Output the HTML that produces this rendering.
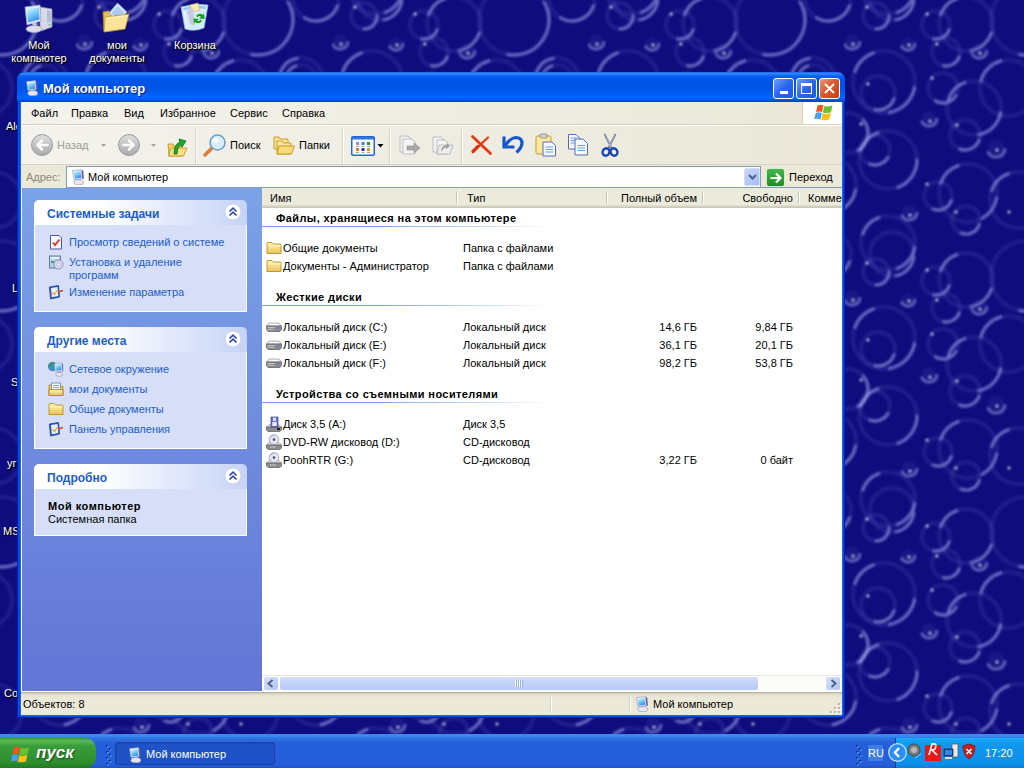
<!DOCTYPE html>
<html><head><meta charset="utf-8">
<style>
*{margin:0;padding:0;box-sizing:border-box}
html,body{width:1024px;height:768px;overflow:hidden}
body{position:relative;background:#14107a;font-family:"Liberation Sans",sans-serif;font-size:11px;color:#000}
.a{position:absolute}
.t{position:absolute;white-space:nowrap;line-height:13px}
/* desktop labels */
.dl{position:absolute;color:#fff;text-align:center;font-size:11px;line-height:13px;text-shadow:1px 1px 0 #000,1px 1px 2px #000}
/* window */
#win{left:17px;top:72px;width:828px;height:646px;background:#0848e4;border-radius:8px 8px 0 0;box-shadow:inset 1px 0 #0024b8,inset -1px 0 #0024b8,inset 0 -1px #0024b8}
#title{left:0;top:0;width:828px;height:30px;border-radius:8px 8px 0 0;background:linear-gradient(#0a50e0 0px,#3a8cff 1px,#2d7ffb 2px,#0a60f4 4px,#0055ea 8px,#0053e4 16px,#005cf2 21px,#0066ff 25px,#0062fa 27px,#0048d2 29px,#0040c4 30px)}
#client{left:4px;top:30px;width:821px;height:613px;background:#ece9d8;overflow:hidden;box-shadow:-1px 0 #1866f0,1px 0 #1866f0,0 1px #1866f0}
.menu{left:0;top:0;width:821px;height:23px;background:linear-gradient(90deg,#f3f2ec,#ebe8d9)}
.tb{left:0;top:23px;width:821px;height:40px;background:linear-gradient(90deg,#f3f2ec,#ebe8d9);border-top:1px solid #fff;border-bottom:1px solid #d8d2bd}
.addr{left:0;top:63px;width:821px;height:23px;background:#ece9d8}
.lp{left:0;top:86px;width:241px;height:504px;background:linear-gradient(#7ba2e7,#6375d6);border-left:1px solid #fff;border-bottom:1px solid #fff}
.ct{left:241px;top:86px;width:580px;height:504px;background:#fff}
.sb{left:0;top:590px;width:821px;height:23px;background:linear-gradient(#a8a596 0,#c8c5b4 1px,#dedbcb 2px,#e8e5d5 4px,#ece9d8 7px)}
.box{position:absolute;left:12px;width:213px}
.bh{position:absolute;left:0;top:0;width:213px;height:25px;border-radius:5px 5px 0 0;background:linear-gradient(90deg,#fff 0%,#fff 30%,#c6d3f7 100%)}
.bb{position:absolute;left:0;top:25px;width:213px;background:#d6dff7;border:1px solid #fff;border-top:none}
.bt{position:absolute;left:13px;top:8px;font-weight:bold;color:#215dc6;font-size:12px;line-height:13px;white-space:nowrap}
.lk{position:absolute;left:34px;color:#215dc6;white-space:nowrap;line-height:13px}
.cb{position:absolute;left:191px;top:3px;width:17px;height:17px;border-radius:50%;background:#fff;box-shadow:0 1px 2px #8ea3d8}
#taskbar{left:0;top:734px;width:1024px;height:34px;background:linear-gradient(#3a7fe6 0,#3d8cf2 1px,#3786ee 3px,#2a6ce0 4px,#2f72e4 5px,#2a66dc 7px,#245edb 10px,#245edb 31px,#1e52c8 34px)}
.hdr{left:0;top:0;width:580px;height:20px;background:linear-gradient(#ebeadb 0,#ebeadb 17px,#e2decd 17px,#e2decd 18px,#d6d2c2 18px,#d6d2c2 19px,#cbc7b8 19px)}
.hs{position:absolute;top:3px;width:2px;height:13px;border-left:1px solid #c7c5b2;border-right:1px solid #fff}
.gh{font-weight:bold;letter-spacing:0.4px}
.gl{position:absolute;left:0;width:290px;height:1px;background:linear-gradient(90deg,#7ba2e7,#7ba2e7 40%,rgba(123,162,231,0))}
.r1{left:340px;width:95px;text-align:right}
.r2{left:440px;width:91px;text-align:right}
.sep{position:absolute;top:3px;width:2px;height:35px;border-left:1px solid #d8d2bd;border-right:1px solid #fff}
.tbtn{position:absolute;width:21px;height:21px;border:1px solid #fff;border-radius:3px;background:linear-gradient(135deg,#6e9ffa,#2a66ec 50%,#1f58e0)}
.sbb{position:absolute;width:16px;height:15px;border-radius:3px;border:1px solid #fff;background:linear-gradient(135deg,#d6e0fc,#c0d0f8 60%,#b0c4f4)}
#start{left:0;top:4px;width:96px;height:30px;border-radius:0 11px 11px 0;background:linear-gradient(#3c9c3c 0,#58b858 3px,#3a9c3a 8px,#2f8f2f 24px,#1f7a1f 30px)}
#tbtask{left:115px;top:8px;width:160px;height:23px;border-radius:3px;background:#1e52c6;border:1px solid #1842a8;box-shadow:inset 1px 1px 0 #1a48b0}
#tray{left:895px;top:4px;width:129px;height:30px;background:linear-gradient(#1cb0f8 0,#12a0f2 3px,#0f96ee 8px,#0c90ea 26px,#0c7fd8 30px);border-left:1px solid #0b3c9c}
.w1{fill:none;stroke:rgba(130,140,235,0.13);stroke-width:4.5}.w2{fill:none;stroke:rgba(185,192,255,0.42);stroke-width:3.4;stroke-linecap:round}.w3{fill:rgba(120,130,230,0.1)}.w4{fill:rgba(255,255,255,0.75)}
</style></head>
<body>
<svg width="0" height="0" style="position:absolute">
<defs>
 <linearGradient id="gcirc" x1="0" y1="0" x2="0" y2="1"><stop offset="0" stop-color="#dedede"/><stop offset="1" stop-color="#a9a9a9"/></linearGradient>
 <linearGradient id="gfold" x1="0" y1="0" x2="0" y2="1"><stop offset="0" stop-color="#fff2b0"/><stop offset="1" stop-color="#e9c55a"/></linearGradient>
 <linearGradient id="gscr" x1="0.3" y1="0" x2="0.7" y2="1"><stop offset="0" stop-color="#c8f4ff"/><stop offset="0.5" stop-color="#6cc4f8"/><stop offset="1" stop-color="#2a8ae8"/></linearGradient>
 <linearGradient id="ggo" x1="0" y1="0" x2="0" y2="1"><stop offset="0" stop-color="#3cb043"/><stop offset="1" stop-color="#138a1b"/></linearGradient>
 <symbol id="i-comp" viewBox="0 0 32 32">
  <path d="M18 5 L30 7 L30 25 L19 29 L18 28 Z" fill="#d7d8e8" stroke="#8c8fb8" stroke-width="0.8"/>
  <path d="M25 8 L29 9 L29 20 L25 21 Z" fill="#b9bcd6"/>
  <circle cx="27.5" cy="23" r="0.9" fill="#46d246"/>
  <path d="M3 5 L18 3 L19 19 L5 23 Z" fill="#e8ebf5" stroke="#9aa0c8" stroke-width="0.8"/>
  <path d="M5 7 L17 5.5 L17.5 17.5 L6 20.5 Z" fill="url(#gscr)"/>
  <path d="M10 21 L14 20 L15 25 L11 25 Z" fill="#c8cbe0"/>
  <ellipse cx="12" cy="27" rx="8" ry="3.5" fill="#dcdde8" stroke="#9a9cb8" stroke-width="0.8"/>
 </symbol>
 <symbol id="i-comps" viewBox="0 0 16 16">
  <path d="M10.5 0.8 L12.3 1.8 L12.8 10 L11 9.6 Z" fill="#54589a"/>
  <path d="M1.5 1.6 L10.6 0.6 L11.1 9.6 L3 10.6 Z" fill="#eceef6" stroke="#8a90bc" stroke-width="0.6"/>
  <path d="M2.8 2.7 L9.7 2 L10.1 8.7 L3.8 9.5 Z" fill="url(#gscr)"/>
  <path d="M6 10.3 L9.5 9.9 L10 12.2 L6.5 12.4 Z" fill="#a8aad0"/>
  <ellipse cx="7.8" cy="13.2" rx="5" ry="2.6" fill="#e6e6f0" stroke="#8a8ab4" stroke-width="0.6"/>
 </symbol>
 <symbol id="i-fold" viewBox="0 0 16 16">
  <path d="M1 3.5 Q1 2.5 2 2.5 L6 2.5 L7.5 4 L14 4 Q15 4 15 5 L15 13.5 L1 13.5 Z" fill="url(#gfold)" stroke="#c08f1a" stroke-width="0.9"/>
  <path d="M1.5 6 L14.5 6" stroke="#fff7d0" stroke-width="0.8"/>
 </symbol>
 <symbol id="i-hdd" viewBox="0 0 16 16">
  <path d="M0.5 7 L3 4 L13 4 L15.5 7 Z" fill="#ececec" stroke="#9a9a9a" stroke-width="0.7"/>
  <path d="M5 5 L11 5 L12 6.3 L4 6.3 Z" fill="#fff"/>
  <path d="M0.5 7 L15.5 7 L15.5 10.5 L14 12.5 L2 12.5 L0.5 10.5 Z" fill="#8c8c8c" stroke="#5a5a5a" stroke-width="0.7"/>
  <path d="M1.5 8.5 L9 8.5 M1.5 10.3 L8 10.3" stroke="#d0d0d0" stroke-width="0.8"/>
  <rect x="11" y="8.2" width="2.5" height="2" fill="#6a7ae8"/>
 </symbol>
 <symbol id="i-cd" viewBox="0 0 16 16">
  <path d="M0.5 11 L3 8.5 L13 8.5 L15.5 11 Z" fill="#e6e6e6" stroke="#9a9a9a" stroke-width="0.7"/>
  <path d="M0.5 11 L15.5 11 L15.5 14 L14 15.5 L2 15.5 L0.5 14 Z" fill="#8c8c8c" stroke="#5a5a5a" stroke-width="0.7"/>
  <path d="M4 13 L10 13" stroke="#d8d8d8" stroke-width="0.8"/>
  <ellipse cx="8" cy="5.6" rx="4.8" ry="5" fill="#e4e4f8" stroke="#8a8aa8" stroke-width="0.7"/>
  <path d="M4.5 4 Q6 1.5 8 1.5" stroke="#b8b8f0" stroke-width="1" fill="none"/>
  <circle cx="8" cy="5.6" r="1.3" fill="#555"/>
 </symbol>
 <symbol id="i-flop" viewBox="0 0 16 16">
  <path d="M0.5 11 L3 8.5 L13 8.5 L15.5 11 Z" fill="#e6e6e6" stroke="#9a9a9a" stroke-width="0.7"/>
  <path d="M0.5 11 L15.5 11 L15.5 14 L14 15.5 L2 15.5 L0.5 14 Z" fill="#8c8c8c" stroke="#5a5a5a" stroke-width="0.7"/>
  <rect x="11" y="12" width="3" height="2" fill="#222"/>
  <rect x="5" y="1" width="7" height="10" fill="#6a72c8" stroke="#3a4098" stroke-width="0.7"/>
  <rect x="7" y="1.5" width="3" height="3.5" fill="#d8dcf0"/>
  <rect x="6.3" y="6" width="4.4" height="4" fill="#e8eaf8"/>
 </symbol>
 <symbol id="i-chev" viewBox="0 0 18 18">
  <circle cx="9" cy="9" r="8" fill="#fff" stroke="#c8d3ee" stroke-width="1"/>
  <path d="M5.5 8.5 L9 5.2 L12.5 8.5 M5.5 12.5 L9 9.2 L12.5 12.5" fill="none" stroke="#2a4ab0" stroke-width="1.6"/>
 </symbol>
 <symbol id="i-sysinfo" viewBox="0 0 16 16">
  <path d="M2.5 1.5 L11 1.5 L13.5 4 L13.5 15 L2.5 15 Z" fill="#f6f8ff" stroke="#4a5a9a" stroke-width="1"/>
  <path d="M5 8.5 L7 11 L11.5 5.5" fill="none" stroke="#e8301a" stroke-width="1.8"/>
 </symbol>
 <symbol id="i-addrem" viewBox="0 0 16 16">
  <rect x="1.5" y="2" width="11" height="12" fill="#b4cfe8" stroke="#5a7290" stroke-width="0.9"/>
  <rect x="2.5" y="3" width="9" height="2" fill="#e8f0ff"/>
  <circle cx="10.5" cy="10.5" r="4.6" fill="#d8d8f0" stroke="#7a7ab0" stroke-width="0.8"/>
  <circle cx="10.5" cy="10.5" r="1.5" fill="#fff" stroke="#9a9ac8" stroke-width="0.6"/>
  <path d="M3 8 L6 8" stroke="#2a9a2a" stroke-width="1.6"/>
 </symbol>
 <symbol id="i-cpl" viewBox="0 0 16 16">
  <path d="M1.5 3 L10.5 1.5 L11.5 13 L2.5 15 Z" fill="#2c5bd0" stroke="#1a3a90" stroke-width="0.8"/>
  <path d="M3 4 L9.5 3 L10.3 12 L3.8 13.3 Z" fill="#e8f0ff"/>
  <path d="M4.5 8.5 L6.5 10.5 L9 6.5" fill="none" stroke="#e8a020" stroke-width="1.3"/>
  <path d="M10 8 L15 6.5" stroke="#c84a2a" stroke-width="1.5"/>
 </symbol>
 <symbol id="i-net" viewBox="0 0 16 16">
  <circle cx="4.5" cy="5.5" r="4.2" fill="#3a8ee0" stroke="#2a5aa0" stroke-width="0.6"/>
  <path d="M1.5 4 Q3 1.5 5.5 2 Q5 5 2.5 6 Z M5 6.5 Q7 5.5 8 7 Q6.5 9.5 5 8.5 Z" fill="#3aa43a"/>
  <path d="M13.8 2 L15 3 L15.3 10.5 L14 10 Z" fill="#54589a"/>
  <path d="M6.5 2.6 L14 1.8 L14.3 10 L7.3 10.8 Z" fill="#eceef6" stroke="#8a90bc" stroke-width="0.6"/>
  <path d="M7.6 3.6 L13.2 3 L13.4 9 L8.3 9.7 Z" fill="url(#gscr)"/>
  <path d="M10 10.6 L12.5 10.3 L12.8 12.5 L10.3 12.6 Z" fill="#a8aad0"/>
  <ellipse cx="11.2" cy="13.4" rx="3.6" ry="2" fill="#e6e6f0" stroke="#8a8ab4" stroke-width="0.6"/>
 </symbol>
 <symbol id="i-mydocs" viewBox="0 0 16 16">
  <path d="M1 4 L6 4 L7.5 5.5 L15 5.5 L15 14.5 L1 14.5 Z" fill="#f2cf5a" stroke="#b88a1a" stroke-width="0.9"/>
  <rect x="3.5" y="2" width="9" height="8" fill="#f4f6ff" stroke="#7080b0" stroke-width="0.8"/>
  <path d="M5 4.5 H11 M5 6.5 H11" stroke="#7aa0d8" stroke-width="0.9"/>
  <path d="M1 8.5 L15 8.5 L15 14.5 L1 14.5 Z" fill="url(#gfold)" stroke="#b88a1a" stroke-width="0.9"/>
 </symbol>
 <symbol id="i-flag" viewBox="0 0 20 18">
  <path d="M4 1.5 Q6.5 0 10 1.5 L8.5 8 Q5.5 6.8 2.5 8 Z" fill="#f0561e"/>
  <path d="M10.8 2 Q14 3.2 19 1.5 L17.5 8.2 Q13.5 9.5 9.3 8.4 Z" fill="#6cc22e"/>
  <path d="M2.3 8.8 Q5.5 7.6 8.4 8.9 L7 15.5 Q4 14.3 0.8 15.3 Z" fill="#4aa0ea"/>
  <path d="M9.2 9.2 Q13.3 10.3 17.3 9 L15.8 15.6 Q12 17 7.8 15.7 Z" fill="#f8c21a"/>
 </symbol>
</defs></svg>
<!--WALL--><svg class="a" style="left:0;top:0" width="1024" height="768"><defs><filter id="wb" x="-20%" y="-20%" width="140%" height="140%"><feGaussianBlur stdDeviation="1"/></filter><pattern id="wp" width="256" height="256" patternUnits="userSpaceOnUse"><rect width="256" height="256" fill="#0f0c7d"/><g filter="url(#wb)"><circle cx="2" cy="20" r="35" class="w1"/><path d="M32.3 2.5A35 35 0 0 1 -4.1 54.5" class="w2"/><circle cx="2" cy="276" r="35" class="w1"/><path d="M32.3 258.5A35 35 0 0 1 -4.1 310.5" class="w2"/><circle cx="258" cy="20" r="35" class="w1"/><path d="M288.3 2.5A35 35 0 0 1 251.9 54.5" class="w2"/><circle cx="258" cy="276" r="35" class="w1"/><path d="M288.3 258.5A35 35 0 0 1 251.9 310.5" class="w2"/><circle cx="60" cy="-2" r="23" class="w1"/><path d="M81.6 5.9A23 23 0 0 1 48.5 17.9" class="w2"/><circle cx="60" cy="254" r="23" class="w1"/><path d="M81.6 261.9A23 23 0 0 1 48.5 273.9" class="w2"/><circle cx="108" cy="16" r="13" class="w1"/><path d="M121.0 16.0A13 13 0 0 1 108.0 29.0" class="w2"/><circle cx="99" cy="7" r="1.6" class="w4"/><circle cx="108" cy="272" r="13" class="w1"/><path d="M121.0 272.0A13 13 0 0 1 108.0 285.0" class="w2"/><circle cx="99" cy="263" r="1.6" class="w4"/><path d="M91.9 42.4A8 8 0 0 1 77.1 45.0" class="w2"/><circle cx="84" cy="41" r="7" class="w3"/><circle cx="85" cy="44" r="1.6" class="w4"/><circle cx="45" cy="80" r="22" class="w1"/><path d="M24.3 72.5A22 22 0 0 1 41.2 58.3" class="w2"/><circle cx="45" cy="80" r="15" class="w1"/><path d="M30.9 74.9A15 15 0 0 1 39.9 65.9" class="w2"/><circle cx="116" cy="82" r="31" class="w1"/><path d="M86.9 71.4A31 31 0 0 1 105.4 52.9" class="w2"/><path d="M146.5 87.4A31 31 0 0 1 121.4 112.5" class="w2"/><circle cx="110" cy="93" r="17" class="w1"/><path d="M126.0 98.8A17 17 0 0 1 107.0 109.7" class="w2"/><circle cx="100" cy="84" r="1.6" class="w4"/><circle cx="124" cy="-2" r="22" class="w1"/><path d="M145.7 1.8A22 22 0 0 1 127.8 19.7" class="w2"/><circle cx="124" cy="254" r="22" class="w1"/><path d="M145.7 257.8A22 22 0 0 1 127.8 275.7" class="w2"/><circle cx="168" cy="25" r="14" class="w1"/><path d="M181.2 29.8A14 14 0 0 1 165.6 38.8" class="w2"/><circle cx="159" cy="14" r="1.6" class="w4"/><circle cx="198" cy="24" r="27" class="w1"/><path d="M172.6 14.8A27 27 0 0 1 188.8 -1.4" class="w2"/><path d="M223.4 33.2A27 27 0 0 1 202.7 50.6" class="w2"/><circle cx="198" cy="280" r="27" class="w1"/><path d="M172.6 270.8A27 27 0 0 1 188.8 254.6" class="w2"/><path d="M223.4 289.2A27 27 0 0 1 202.7 306.6" class="w2"/><path d="M146.9 44.2A7 7 0 0 1 133.9 46.5" class="w2"/><circle cx="140" cy="43" r="6" class="w3"/><circle cx="141" cy="45" r="1.6" class="w4"/><circle cx="178" cy="52" r="14" class="w1"/><path d="M191.2 56.8A14 14 0 0 1 175.6 65.8" class="w2"/><circle cx="169" cy="44" r="1.6" class="w4"/><path d="M218.9 51.4A8 8 0 0 1 204.1 54.0" class="w2"/><circle cx="211" cy="50" r="7" class="w3"/><circle cx="212" cy="53" r="1.6" class="w4"/><circle cx="240" cy="88" r="28" class="w1"/><path d="M213.0 80.8A28 28 0 0 1 232.8 61.0" class="w2"/><circle cx="-16" cy="88" r="28" class="w1"/><path d="M-43.0 80.8A28 28 0 0 1 -23.2 61.0" class="w2"/><circle cx="175" cy="88" r="15" class="w1"/><path d="M188.0 95.5A15 15 0 0 1 167.5 101.0" class="w2"/><circle cx="164" cy="78" r="1.6" class="w4"/><circle cx="206" cy="108" r="27" class="w1"/><path d="M180.6 98.8A27 27 0 0 1 196.8 82.6" class="w2"/><path d="M232.6 112.7A27 27 0 0 1 210.7 134.6" class="w2"/><path d="M168.9 119.4A8 8 0 0 1 154.1 122.0" class="w2"/><circle cx="161" cy="118" r="7" class="w3"/><circle cx="162" cy="121" r="1.6" class="w4"/><circle cx="80" cy="133" r="20" class="w1"/><path d="M95.3 120.1A20 20 0 0 1 90.0 150.3" class="w2"/><circle cx="93" cy="124" r="1.6" class="w4"/><circle cx="120" cy="160" r="29" class="w1"/><path d="M92.7 150.1A29 29 0 0 1 110.1 132.7" class="w2"/><path d="M149.0 160.0A29 29 0 0 1 129.9 187.3" class="w2"/><circle cx="107" cy="150" r="15" class="w1"/><path d="M120.0 157.5A15 15 0 0 1 101.9 164.1" class="w2"/><circle cx="197" cy="135" r="15" class="w1"/><path d="M211.1 140.1A15 15 0 0 1 191.9 149.1" class="w2"/><circle cx="189" cy="125" r="1.6" class="w4"/><path d="M236.9 149.6A9 9 0 0 1 220.2 152.5" class="w2"/><circle cx="228" cy="148" r="8" class="w3"/><circle cx="229" cy="150" r="1.6" class="w4"/><circle cx="200" cy="193" r="29" class="w1"/><path d="M172.7 183.1A29 29 0 0 1 190.1 165.7" class="w2"/><path d="M228.6 198.0A29 29 0 0 1 214.5 218.1" class="w2"/><circle cx="250" cy="200" r="28" class="w1"/><path d="M223.7 190.4A28 28 0 0 1 240.4 173.7" class="w2"/><circle cx="241" cy="212" r="1.6" class="w4"/><circle cx="-6" cy="200" r="28" class="w1"/><path d="M-32.3 190.4A28 28 0 0 1 -15.6 173.7" class="w2"/><circle cx="-15" cy="212" r="1.6" class="w4"/><circle cx="60" cy="185" r="28" class="w1"/><path d="M87.6 189.9A28 28 0 0 1 64.9 212.6" class="w2"/><circle cx="170" cy="196" r="14" class="w1"/><path d="M183.2 200.8A14 14 0 0 1 165.2 209.2" class="w2"/><circle cx="159" cy="184" r="1.6" class="w4"/><circle cx="198" cy="220" r="14" class="w1"/><path d="M211.2 224.8A14 14 0 0 1 193.2 233.2" class="w2"/><circle cx="188" cy="212" r="1.6" class="w4"/><path d="M148.9 213.4A8 8 0 0 1 134.1 216.0" class="w2"/><circle cx="141" cy="212" r="7" class="w3"/><circle cx="142" cy="215" r="1.6" class="w4"/><circle cx="120" cy="243" r="27" class="w1"/><path d="M94.6 233.8A27 27 0 0 1 110.8 217.6" class="w2"/><path d="M146.6 247.7A27 27 0 0 1 129.2 268.4" class="w2"/><circle cx="120" cy="-13" r="27" class="w1"/><path d="M94.6 -22.2A27 27 0 0 1 110.8 -38.4" class="w2"/><path d="M146.6 -8.3A27 27 0 0 1 129.2 12.4" class="w2"/></g></pattern></defs><rect width="1024" height="768" fill="url(#wp)"/></svg><!--/WALL-->
<!-- desktop icons -->
<svg class="a" style="left:22px;top:2px" width="32" height="32"><use href="#i-comp"/></svg>
<svg class="a" style="left:100px;top:2px" width="32" height="32" viewBox="0 0 32 32"><path d="M3 10 L9 9 L11 11 L24 10 L23 26 L4 29 Z" fill="#e8c050" stroke="#b88a20" stroke-width="0.8"/><path d="M9 11 L17.5 1 L27 10 L18.5 20 Z" fill="#d6e8fc" stroke="#7a9ad0" stroke-width="0.8"/><path d="M11.5 11 L17.5 4 L24.5 10.5 L18.5 17.5 Z" fill="#a8caf4"/><path d="M5 15 L29 12 L25 27 L4 30 Z" fill="#fbe49a" stroke="#c49a28" stroke-width="0.8"/><path d="M6 16.5 L27.5 13.5" stroke="#fff4c8" stroke-width="1"/></svg>
<svg class="a" style="left:178px;top:2px" width="32" height="32" viewBox="0 0 32 32"><path d="M3 5 Q16 1 30 3 L26 26 Q16 30 7 27 Z" fill="#d4ecfc" stroke="#8ab8e0" stroke-width="0.8"/><path d="M5 6 Q16 3 28 4.5 L27.5 7 Q16 5.5 5.5 8.5 Z" fill="#9cc8f0"/><path d="M12 3 L20 1 L22 8 L14 10 Z" fill="#f8eab0" stroke="#d0b060" stroke-width="0.6"/><path d="M9 9 L15 6.5 L17 24 L12 22 Z" fill="#c8c8e0"/><path d="M18 14 Q21 10 25 13 L26 11 L26.5 17 L21 16.5 L23 15 Q21 13 19.5 15.5 Z M24 19 Q21 23 17 20 L16 22 L15.5 16.5 L21 17 L19 18.5 Q21 20 22.5 17.5 Z" fill="#12a01a"/><path d="M6 8 L9 26" stroke="#ffffff" stroke-width="1.2" opacity="0.6"/></svg>
<div class="dl" style="left:0;top:39px;width:78px">Мой<br>компьютер</div>
<div class="dl" style="left:78px;top:39px;width:78px">мои<br>документы</div>
<div class="dl" style="left:156px;top:39px;width:78px">Корзина</div>

<div class="dl" style="left:6px;top:120px;text-align:left">Alc</div>
<div class="dl" style="left:12px;top:282px;text-align:left">L</div>
<div class="dl" style="left:11px;top:376px;text-align:left">S</div>
<div class="dl" style="left:7px;top:457px;text-align:left">уг</div>
<div class="dl" style="left:3px;top:525px;text-align:left">MS</div>
<div class="dl" style="left:4px;top:687px;text-align:left">Co</div>
<div class="a" id="win">
 <div class="a" id="title">
  <svg class="a" style="left:8px;top:8px" width="16" height="16"><use href="#i-comps"/></svg>
  <div class="t" style="left:26px;top:9px;color:#fff;font-weight:bold;font-size:13px;line-height:15px;text-shadow:1px 1px #0a1883">Мой компьютер</div>
  <div class="a tbtn" style="left:756px;top:6px"><div class="a" style="left:6px;top:12px;width:8px;height:3px;background:#fff"></div></div>
  <div class="a tbtn" style="left:779px;top:6px"><div class="a" style="left:4px;top:4px;width:11px;height:11px;border:1px solid #fff;border-top-width:3px"></div></div>
  <div class="a tbtn" style="left:802px;top:6px;background:linear-gradient(135deg,#eb9a7c,#dc5a2e 45%,#c83c10)"><svg class="a" style="left:3px;top:3px" width="13" height="13"><path d="M2 2 L11 11 M11 2 L2 11" stroke="#fff" stroke-width="2"/></svg></div>
 </div>
 <div class="a" id="client">
  <div class="a menu">
   <div class="t" style="left:10px;top:5px">Файл</div>
   <div class="t" style="left:50px;top:5px">Правка</div>
   <div class="t" style="left:103px;top:5px">Вид</div>
   <div class="t" style="left:139px;top:5px">Избранное</div>
   <div class="t" style="left:209px;top:5px">Сервис</div>
   <div class="t" style="left:261px;top:5px">Справка</div>
   <div class="a" style="left:781px;top:0;width:40px;height:22px;background:#fff;border-left:1px solid #d8d2bd"><svg class="a" style="left:10px;top:2px" width="21" height="18"><use href="#i-flag"/></svg></div>
   <div class="a" style="left:0;top:22px;width:821px;height:1px;background:#d8d2bd"></div>
  </div>
  <div class="a tb">
   <svg class="a" style="left:10px;top:8px" width="22" height="22" viewBox="0 0 22 22"><circle cx="11" cy="11" r="10.5" fill="url(#gcirc)" stroke="#9c9c9c" stroke-width="1"/><path d="M16.5 11 H7 M11 6.5 L6.5 11 L11 15.5" fill="none" stroke="#fafafa" stroke-width="2.6" stroke-linecap="round" stroke-linejoin="round"/></svg>
   <div class="t" style="left:36px;top:13px;color:#a19f92">Назад</div>
   <svg class="a" style="left:79px;top:18px" width="7" height="4"><path d="M1 0 H6 L3.5 3 Z" fill="#a8a69a"/></svg>
   <svg class="a" style="left:97px;top:8px" width="22" height="22" viewBox="0 0 22 22"><circle cx="11" cy="11" r="10.5" fill="url(#gcirc)" stroke="#9c9c9c" stroke-width="1"/><path d="M5.5 11 H15 M11 6.5 L15.5 11 L11 15.5" fill="none" stroke="#fafafa" stroke-width="2.6" stroke-linecap="round" stroke-linejoin="round"/></svg>
   <svg class="a" style="left:129px;top:18px" width="7" height="4"><path d="M1 0 H6 L3.5 3 Z" fill="#a8a69a"/></svg>
   <svg class="a" style="left:146px;top:8px" width="22" height="24" viewBox="0 0 22 24"><path d="M1 10 L6 10 L7.5 12 L15 12 L15 22 L2 22 Z" fill="#f0d070" stroke="#c4951e" stroke-width="0.9"/><path d="M4 14 L20 14 L16.5 22 L1.5 22 Z" fill="#f8e08a" stroke="#c4951e" stroke-width="0.9"/><path d="M7 20 Q7 10 13 8 L12 5 L19 7 L15 13 L14.5 10.5 Q10.5 12 10 20 Z" fill="#22a82a" stroke="#0c6c10" stroke-width="0.8" stroke-linejoin="round"/></svg>
   <div class="sep" style="left:174px"></div>
   <svg class="a" style="left:182px;top:7px" width="24" height="24" viewBox="0 0 24 24"><path d="M2 22 L9 15" stroke="#d6803a" stroke-width="3.5" stroke-linecap="round"/><circle cx="14.5" cy="9.5" r="7.5" fill="#d8eefc" stroke="#6e9fc6" stroke-width="1.6"/><circle cx="12.5" cy="7.5" r="2.5" fill="#fff"/></svg>
   <div class="t" style="left:209px;top:13px">Поиск</div>
   <svg class="a" style="left:252px;top:8px" width="22" height="22" viewBox="0 0 22 22"><path d="M1 3 L6 3 L7.5 5 L15 5 L15 15 L1 15 Z" fill="#f7e29a" stroke="#c4951e" stroke-width="0.9"/><path d="M4 7 L9 7 L10.5 9 L18 9 L18 20 L4 20 Z" fill="url(#gfold)" stroke="#c4951e" stroke-width="0.9"/><path d="M6 12 L21.5 12 L18.5 20 L4 20 Z" fill="#f8dc78" stroke="#c4951e" stroke-width="0.9"/></svg>
   <div class="t" style="left:278px;top:13px">Папки</div>
   <div class="sep" style="left:321px"></div>
   <svg class="a" style="left:330px;top:10px" width="24" height="20" viewBox="0 0 24 20"><rect x="0.75" y="0.75" width="22.5" height="18.5" rx="1.2" fill="#fff" stroke="#1f66d8" stroke-width="1.5"/><rect x="1" y="1" width="22" height="2.5" fill="#2f76e2"/><rect x="5" y="6" width="3" height="3" fill="#9a8ed0"/><rect x="10.5" y="6" width="3" height="3" fill="#2a8ae8"/><rect x="16" y="6" width="3" height="3" fill="#1a9a3a"/><rect x="5" y="12" width="3" height="3" fill="#f0703a"/><rect x="10.5" y="12" width="3" height="3" fill="#1a3aa0"/><rect x="16" y="12" width="3" height="3" fill="#d8a020"/><path d="M5 10.5 H8 M10.5 10.5 H13.5 M16 10.5 H19 M5 16.5 H8 M10.5 16.5 H13.5 M16 16.5 H19" stroke="#888" stroke-width="0.8"/></svg>
   <svg class="a" style="left:356px;top:18px" width="7" height="4"><path d="M0.5 0 H6.5 L3.5 3.5 Z" fill="#000"/></svg>
   <div class="sep" style="left:368px"></div>
   <svg class="a" style="left:377px;top:8px" width="24" height="22" viewBox="0 0 24 22"><path d="M2 2 L10 2 L13 5 L13 18 L2 18 Z" fill="#f0f0f0" stroke="#b8b8b8" stroke-width="0.9"/><path d="M5 5 L14 5 L17 8 L17 20 L5 20 Z" fill="#f4f4f4" stroke="#b8b8b8" stroke-width="0.9"/><path d="M9 12 L16 12 L16 9 L22 14 L16 19 L16 16 L9 16 Z" fill="#a8a8a8" stroke="#8a8a8a" stroke-width="0.6"/></svg>
   <svg class="a" style="left:408px;top:8px" width="26" height="22" viewBox="0 0 26 22"><path d="M4 3 L12 3 L15 6 L15 18 L4 18 Z" fill="#f2f2f2" stroke="#b8b8b8" stroke-width="0.9"/><path d="M8 6 L16 6 L19 9 L19 20 L8 20 Z" fill="#f4f4f4" stroke="#b8b8b8" stroke-width="0.9"/><path d="M10 11 L24 11 L21 20 L8 20 Z" fill="#ededed" stroke="#b0b0b0" stroke-width="0.8"/><path d="M12 18 Q12 12 18 11 L17 9 L21 12 L17 15 L17 13 Q14 14 12 18 Z" fill="#9a9a9a"/></svg>
   <div class="sep" style="left:440px"></div>
   <svg class="a" style="left:449px;top:8px" width="24" height="22" viewBox="0 0 24 22"><path d="M2.5 2.5 L20.5 19.5" stroke="#e8380e" stroke-width="2.8" stroke-linecap="round"/><path d="M18 3.5 L3 17.5" stroke="#e8380e" stroke-width="2.2" stroke-linecap="round"/><path d="M8 12.5 L3 17.5" stroke="#e03008" stroke-width="3.2" stroke-linecap="round"/></svg>
   <svg class="a" style="left:481px;top:8px" width="22" height="22" viewBox="0 0 22 22"><path d="M2 2.5 L2 13 L12.5 13" fill="none" stroke="#1456cc" stroke-width="3.2" stroke-linejoin="miter"/><path d="M3 12 Q8.5 3.5 14.5 3.5 Q20 4 20 9.5 Q19.5 14 14.5 18.5" fill="none" stroke="#1456cc" stroke-width="3.2" stroke-linecap="butt"/></svg>
   <svg class="a" style="left:514px;top:7px" width="22" height="24" viewBox="0 0 22 24"><rect x="1" y="3" width="15" height="18" rx="1.5" fill="#fce79a" stroke="#c49a28" stroke-width="1"/><rect x="5" y="1" width="7" height="4" rx="1" fill="#d0d0d0" stroke="#888" stroke-width="0.8"/><path d="M8 9 L17 9 L20.5 12.5 L20.5 23 L8 23 Z" fill="#f4f8ff" stroke="#5a6ab8" stroke-width="1"/><path d="M10.5 14 H18 M10.5 16.5 H18 M10.5 19 H18" stroke="#6aa0e0" stroke-width="1.2"/></svg>
   <svg class="a" style="left:546px;top:7px" width="23" height="24" viewBox="0 0 23 24"><path d="M1.5 1.5 L9 1.5 L12.5 5 L12.5 16 L1.5 16 Z" fill="#f4f8ff" stroke="#5a6ab8" stroke-width="1"/><path d="M3.5 5 H10 M3.5 7.5 H10 M3.5 10 H10" stroke="#6aa0e0" stroke-width="1.1"/><path d="M8 6 L16 6 L20.5 10.5 L20.5 22 L8 22 Z" fill="#f4f8ff" stroke="#5a6ab8" stroke-width="1"/><path d="M10.5 12.5 H18 M10.5 15 H18 M10.5 17.5 H18" stroke="#6aa0e0" stroke-width="1.2"/></svg>
   <svg class="a" style="left:579px;top:7px" width="20" height="24" viewBox="0 0 20 24"><path d="M4.5 1 L11.5 15 M15.5 1 L8.5 15" stroke="#5c6a88" stroke-width="1.8"/><path d="M5 1.5 L11 14 M15 1.5 L9 14" stroke="#e8eef8" stroke-width="0.6"/><ellipse cx="6" cy="19" rx="3.3" ry="3.8" transform="rotate(25 6 19)" fill="none" stroke="#1a44b0" stroke-width="2.4"/><ellipse cx="14" cy="19" rx="3.3" ry="3.8" transform="rotate(-25 14 19)" fill="none" stroke="#1a44b0" stroke-width="2.4"/></svg>
  </div>
  <div class="a addr">
   <div class="t" style="left:5px;top:6px;color:#8d8a7c">Адрес:</div>
   <div class="a" style="left:45px;top:1px;width:695px;height:22px;background:#fff;border:1px solid #7f9db9">
    <svg class="a" style="left:4px;top:2px" width="16" height="16"><use href="#i-comps"/></svg>
    <div class="t" style="left:21px;top:4px">Мой компьютер</div>
    <div class="a" style="left:677px;top:1px;width:16px;height:18px;border-radius:2px;background:linear-gradient(135deg,#c6d6fb,#b4c8f6 60%,#a6bdf3);border:1px solid #d2ddf8"><svg class="a" style="left:3px;top:5px" width="9" height="7"><path d="M1 1 L4.5 4.5 L8 1" fill="none" stroke="#4d6185" stroke-width="2"/></svg></div>
   </div>
   <div class="a" style="left:745px;top:3px;width:19px;height:19px;border-radius:3px;background:linear-gradient(#44b64a,#1b8d22);border:1px solid #d6e8d0"><svg class="a" style="left:2px;top:2px" width="14" height="14" viewBox="0 0 14 14"><path d="M1.5 7 H11.5 M7 2.5 L11.5 7 L7 11.5" fill="none" stroke="#fff" stroke-width="2.2"/></svg></div>
   <div class="t" style="left:768px;top:6px">Переход</div>
  </div>
  <div class="a lp">
   <div class="box" style="top:12px">
    <div class="bh"><div class="bt">Системные задачи</div><svg class="a" style="left:190px;top:3px" width="18" height="18"><use href="#i-chev"/></svg></div>
    <div class="bb" style="height:87px">
     <svg class="a" style="left:13px;top:9px" width="16" height="16"><use href="#i-sysinfo"/></svg>
     <svg class="a" style="left:13px;top:29px" width="16" height="16"><use href="#i-addrem"/></svg>
     <svg class="a" style="left:13px;top:59px" width="16" height="16"><use href="#i-cpl"/></svg>
     <div class="lk" style="top:11px">Просмотр сведений о системе</div>
     <div class="lk" style="top:31px">Установка и удаление<br>программ</div>
     <div class="lk" style="top:61px">Изменение параметра</div>
    </div>
   </div>
   <div class="box" style="top:139px">
    <div class="bh"><div class="bt">Другие места</div><svg class="a" style="left:190px;top:3px" width="18" height="18"><use href="#i-chev"/></svg></div>
    <div class="bb" style="height:97px">
     <svg class="a" style="left:13px;top:9px" width="16" height="16"><use href="#i-net"/></svg>
     <svg class="a" style="left:13px;top:29px" width="16" height="16"><use href="#i-mydocs"/></svg>
     <svg class="a" style="left:13px;top:49px" width="16" height="16"><use href="#i-fold"/></svg>
     <svg class="a" style="left:13px;top:69px" width="16" height="16"><use href="#i-cpl"/></svg>
     <div class="lk" style="top:11px">Сетевое окружение</div>
     <div class="lk" style="top:31px">мои документы</div>
     <div class="lk" style="top:51px">Общие документы</div>
     <div class="lk" style="top:71px">Панель управления</div>
    </div>
   </div>
   <div class="box" style="top:276px">
    <div class="bh"><div class="bt">Подробно</div><svg class="a" style="left:190px;top:3px" width="18" height="18"><use href="#i-chev"/></svg></div>
    <div class="bb" style="height:47px">
     <div class="t" style="left:13px;top:11px;font-weight:bold;letter-spacing:0.5px">Мой компьютер</div>
     <div class="t" style="left:13px;top:24px">Системная папка</div>
    </div>
   </div>
  </div>
  <div class="a ct">
   <div class="a" style="left:0;top:-1px;width:580px;height:1px;background:#7f9db9"></div>
   <div class="a hdr">
    <div class="t" style="left:8px;top:4px">Имя</div>
    <div class="hs" style="left:194px"></div>
    <div class="t" style="left:205px;top:4px">Тип</div>
    <div class="hs" style="left:344px"></div>
    <div class="t" style="left:340px;top:4px;width:95px;text-align:right">Полный объем</div>
    <div class="hs" style="left:440px"></div>
    <div class="t" style="left:440px;top:4px;width:91px;text-align:right">Свободно</div>
    <div class="hs" style="left:536px"></div>
    <div class="t" style="left:546px;top:4px">Комментарий</div>
   </div>
   <div class="t gh" style="left:14px;top:24px">Файлы, хранящиеся на этом компьютере</div>
   <div class="gl" style="top:38px"></div>
   <div class="t" style="left:21px;top:54px">Общие документы</div>
   <div class="t" style="left:201px;top:54px">Папка с файлами</div>
   <div class="t" style="left:21px;top:72px">Документы - Администратор</div>
   <div class="t" style="left:201px;top:72px">Папка с файлами</div>
   <div class="t gh" style="left:14px;top:103px">Жесткие диски</div>
   <div class="gl" style="top:117px"></div>
   <div class="t" style="left:21px;top:133px">Локальный диск (C:)</div>
   <div class="t" style="left:201px;top:133px">Локальный диск</div>
   <div class="t r1" style="top:133px">14,6 ГБ</div>
   <div class="t r2" style="top:133px">9,84 ГБ</div>
   <div class="t" style="left:21px;top:151px">Локальный диск (E:)</div>
   <div class="t" style="left:201px;top:151px">Локальный диск</div>
   <div class="t r1" style="top:151px">36,1 ГБ</div>
   <div class="t r2" style="top:151px">20,1 ГБ</div>
   <div class="t" style="left:21px;top:169px">Локальный диск (F:)</div>
   <div class="t" style="left:201px;top:169px">Локальный диск</div>
   <div class="t r1" style="top:169px">98,2 ГБ</div>
   <div class="t r2" style="top:169px">53,8 ГБ</div>
   <div class="t gh" style="left:14px;top:200px">Устройства со съемными носителями</div>
   <div class="gl" style="top:214px"></div>
   <div class="t" style="left:21px;top:230px">Диск 3,5 (A:)</div>
   <div class="t" style="left:201px;top:230px">Диск 3,5</div>
   <div class="t" style="left:21px;top:248px">DVD-RW дисковод (D:)</div>
   <div class="t" style="left:201px;top:248px">CD-дисковод</div>
   <div class="t" style="left:21px;top:266px">PoohRTR (G:)</div>
   <div class="t" style="left:201px;top:266px">CD-дисковод</div>
   <div class="t r1" style="top:266px">3,22 ГБ</div>
   <div class="t r2" style="top:266px">0 байт</div>
   <svg class="a" style="left:4px;top:52px" width="16" height="16"><use href="#i-fold"/></svg>
   <svg class="a" style="left:4px;top:70px" width="16" height="16"><use href="#i-fold"/></svg>
   <svg class="a" style="left:4px;top:131px" width="16" height="16"><use href="#i-hdd"/></svg>
   <svg class="a" style="left:4px;top:149px" width="16" height="16"><use href="#i-hdd"/></svg>
   <svg class="a" style="left:4px;top:167px" width="16" height="16"><use href="#i-hdd"/></svg>
   <svg class="a" style="left:4px;top:228px" width="16" height="16"><use href="#i-flop"/></svg>
   <svg class="a" style="left:4px;top:246px" width="16" height="16"><use href="#i-cd"/></svg>
   <svg class="a" style="left:4px;top:264px" width="16" height="16"><use href="#i-cd"/></svg>
   <!-- h scrollbar -->
   <div class="a" style="left:0;top:487px;width:580px;height:16px;background:#fcfcf8;border-top:1px solid #ebe8da">
    <div class="a sbb" style="left:1px;top:0px"><svg class="a" style="left:3px;top:2px" width="7" height="9"><path d="M5.5 1 L1.5 4.5 L5.5 8" fill="none" stroke="#4d6185" stroke-width="2"/></svg></div>
    <div class="a sbb" style="left:17px;top:0px;width:480px;background:linear-gradient(#d4defa,#c2d2fa 50%,#b6c9f6)"><div class="a" style="left:235px;top:3px;width:8px;height:7px;background:repeating-linear-gradient(90deg,#fff 0 1px,#8caaf0 1px 2px)"></div></div>
    <div class="a sbb" style="left:563px;top:0px"><svg class="a" style="left:4px;top:2px" width="7" height="9"><path d="M1.5 1 L5.5 4.5 L1.5 8" fill="none" stroke="#4d6185" stroke-width="2"/></svg></div>
   </div>
  </div>
  <div class="a sb">
   <div class="t" style="left:2px;top:6px">Объектов: 8</div>
   <div class="a" style="left:529px;top:3px;width:2px;height:17px;border-left:1px solid #d8d2bd;border-right:1px solid #fff"></div>
   <div class="a" style="left:608px;top:3px;width:2px;height:17px;border-left:1px solid #d8d2bd;border-right:1px solid #fff"></div>
   <svg class="a" style="left:614px;top:4px" width="16" height="16"><use href="#i-comps"/></svg>
   <div class="t" style="left:632px;top:6px">Мой компьютер</div>
   <svg class="a" style="left:809px;top:11px" width="12" height="12"><rect x="9" y="1" width="2" height="2" fill="#fff"/><rect x="5" y="5" width="2" height="2" fill="#fff"/><rect x="9" y="5" width="2" height="2" fill="#fff"/><rect x="1" y="9" width="2" height="2" fill="#fff"/><rect x="5" y="9" width="2" height="2" fill="#fff"/><rect x="9" y="9" width="2" height="2" fill="#fff"/><rect x="8" y="0" width="2" height="2" fill="#b8b4a0"/><rect x="4" y="4" width="2" height="2" fill="#b8b4a0"/><rect x="8" y="4" width="2" height="2" fill="#b8b4a0"/><rect x="0" y="8" width="2" height="2" fill="#b8b4a0"/><rect x="4" y="8" width="2" height="2" fill="#b8b4a0"/><rect x="8" y="8" width="2" height="2" fill="#b8b4a0"/></svg>
  </div>
 </div>
</div>
<div class="a" id="taskbar">
 <div class="a" id="start"><svg class="a" style="left:10px;top:8px" width="20" height="18"><use href="#i-flag"/></svg><div class="t" style="left:36px;top:5px;font-size:17px;line-height:20px;font-weight:bold;font-style:italic;color:#fff;text-shadow:1px 1px 2px #1a4a1a">пуск</div></div>
 <svg class="a" style="left:105px;top:11px" width="8" height="22"><rect x="1" y="0" width="2" height="2" fill="#0c2a8c"/><rect x="2" y="1" width="1.5" height="1.5" fill="#4aa8f8"/><rect x="4" y="3" width="2" height="2" fill="#0c2a8c"/><rect x="5" y="4" width="1.5" height="1.5" fill="#4aa8f8"/><rect x="1" y="6" width="2" height="2" fill="#0c2a8c"/><rect x="2" y="7" width="1.5" height="1.5" fill="#4aa8f8"/><rect x="4" y="9" width="2" height="2" fill="#0c2a8c"/><rect x="5" y="10" width="1.5" height="1.5" fill="#4aa8f8"/><rect x="1" y="12" width="2" height="2" fill="#0c2a8c"/><rect x="2" y="13" width="1.5" height="1.5" fill="#4aa8f8"/><rect x="4" y="15" width="2" height="2" fill="#0c2a8c"/><rect x="5" y="16" width="1.5" height="1.5" fill="#4aa8f8"/><rect x="1" y="18" width="2" height="2" fill="#0c2a8c"/><rect x="2" y="19" width="1.5" height="1.5" fill="#4aa8f8"/></svg>
 <div class="a" id="tbtask"><svg class="a" style="left:12px;top:4px" width="16" height="16"><use href="#i-comps"/></svg><div class="t" style="left:30px;top:5px;color:#fff">Мой компьютер</div></div>
 <svg class="a" style="left:855px;top:11px" width="8" height="22"><rect x="1" y="0" width="2" height="2" fill="#0c2a8c"/><rect x="2" y="1" width="1.5" height="1.5" fill="#4aa8f8"/><rect x="4" y="3" width="2" height="2" fill="#0c2a8c"/><rect x="5" y="4" width="1.5" height="1.5" fill="#4aa8f8"/><rect x="1" y="6" width="2" height="2" fill="#0c2a8c"/><rect x="2" y="7" width="1.5" height="1.5" fill="#4aa8f8"/><rect x="4" y="9" width="2" height="2" fill="#0c2a8c"/><rect x="5" y="10" width="1.5" height="1.5" fill="#4aa8f8"/><rect x="1" y="12" width="2" height="2" fill="#0c2a8c"/><rect x="2" y="13" width="1.5" height="1.5" fill="#4aa8f8"/><rect x="4" y="15" width="2" height="2" fill="#0c2a8c"/><rect x="5" y="16" width="1.5" height="1.5" fill="#4aa8f8"/><rect x="1" y="18" width="2" height="2" fill="#0c2a8c"/><rect x="2" y="19" width="1.5" height="1.5" fill="#4aa8f8"/></svg>
 <div class="a" style="left:868px;top:11px;width:15px;height:16px;background:#3d7ee8"></div>
 <div class="t" style="left:868px;top:13px;color:#fff">RU</div>
 <div class="a" id="tray">
  <svg class="a" style="left:-8px;top:5px" width="19" height="19" viewBox="0 0 19 19"><circle cx="9.5" cy="9.5" r="8.8" fill="#2a8ef8" stroke="#c8e4ff" stroke-width="1.2"/><path d="M11 5 L7 9.5 L11 14" fill="none" stroke="#fff" stroke-width="2.4"/></svg>
  <svg class="a" style="left:11px;top:5px" width="16" height="17" viewBox="0 0 16 17"><circle cx="7" cy="7" r="6" fill="#7a7a7a" stroke="#3a3a3a" stroke-width="0.8"/><circle cx="7" cy="7" r="3" fill="#b8b8b8"/><path d="M8 15 L14 11" stroke="#a8b8e8" stroke-width="1"/></svg>
  <div class="a" style="left:29px;top:7px;width:16px;height:16px;background:#e81818"><svg class="a" style="left:1px;top:-3px" width="14" height="14"><path d="M3 13 L6 2 Q12 1 9 7 Q8 8 6 8 L11 13" fill="none" stroke="#fff" stroke-width="1.6"/></svg></div>
  <svg class="a" style="left:47px;top:5px" width="16" height="17" viewBox="0 0 16 17"><rect x="9" y="1" width="6" height="13" fill="#e8e8e8" stroke="#555" stroke-width="0.7"/><rect x="1" y="6" width="9" height="7" fill="#1a3aa8" stroke="#333" stroke-width="0.8"/><rect x="2" y="7" width="7" height="5" fill="#2a8af0"/><rect x="2" y="14" width="7" height="2" fill="#ddd"/></svg>
  <svg class="a" style="left:66px;top:5px" width="14" height="17" viewBox="0 0 14 17"><path d="M7 1 L13 3 Q13 12 7 16 Q1 12 1 3 Z" fill="#c81e1e" stroke="#8a1010" stroke-width="0.8"/><path d="M4.5 6 L9.5 11 M9.5 6 L4.5 11" stroke="#fff" stroke-width="1.6"/></svg>
  <div class="t" style="left:89px;top:9px;color:#fff">17:20</div>
 </div>
</div>
</body></html>
